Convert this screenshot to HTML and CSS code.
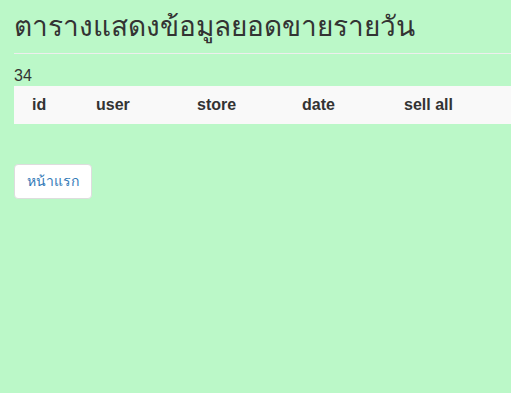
FILE: index.html
```html
<!DOCTYPE html>
<html lang="th">
<head>
    <meta charset="UTF-8">
    <meta name="viewport" content="width=device-width, initial-scale=1.0">
    <title>ตารางแสดงข้อมูลยอดขายรายวัน</title>
    <link rel="stylesheet" href="styles.css">
</head>
<body>
    <div class="container">
        <h1>ตารางแสดงข้อมูลยอดขายรายวัน</h1>
        <hr>
        <div class="count">34</div>
        <table class="sales-table">
            <thead>
                <tr>
                    <th class="col-id">id</th>
                    <th class="col-user">user</th>
                    <th class="col-store">store</th>
                    <th class="col-date">date</th>
                    <th class="col-sell">sell all</th>
                </tr>
            </thead>
            <tbody></tbody>
        </table>

        <button class="home-btn">หน้าแรก</button>
    </div>
</body>
</html>
```

FILE: styles.css
```css
* {
    margin: 0;
    padding: 0;
    box-sizing: border-box;
}

body {
    font-family: 'Liberation Sans', Arial, sans-serif;
    background: #bbf8c8;
    color: #333;
    font-size: 16px;
}

.container {
    width: 100%;
    padding-left: 14px;
}

h1 {
    font-size: 28px;
    font-weight: 500;
    line-height: 1.1;
    margin-top: 12px;
    margin-bottom: 10px;
}

hr {
    border: 0;
    border-top: 1px solid #eee;
    margin-top: 6px;
    margin-bottom: 12px;
}

.count {
    line-height: 20px;
    height: 20px;
}

.sales-table {
    width: 100%;
    border-collapse: collapse;
    background: #f9f9f9;
    margin-bottom: 40px;
}

.sales-table th {
    text-align: left;
    font-weight: bold;
    padding: 9px 18px;
    line-height: 20px;
}

.col-id { width: 64px; }
.col-user { width: 101px; }
.col-store { width: 105px; }
.col-date { width: 102px; }

.home-btn {
    font-family: inherit;
    font-size: 14px;
    color: #337ab7;
    background: #fff;
    border: 1px solid #ddd;
    border-radius: 4px;
    padding: 6px 12px;
    line-height: 21px;
    height: 35px;
    cursor: pointer;
}
```
